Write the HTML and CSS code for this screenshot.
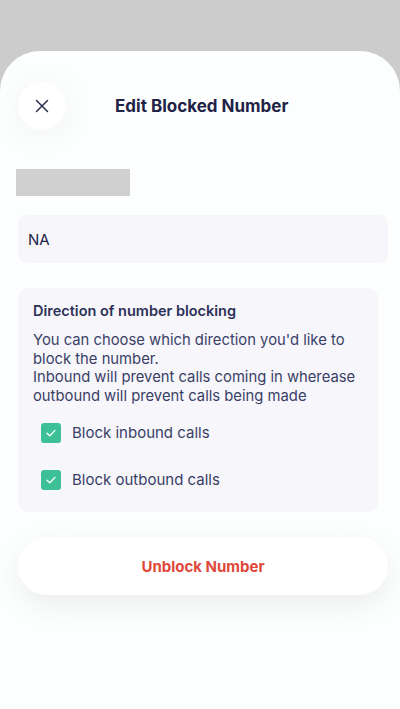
FILE: index.html
```html
<!DOCTYPE html>
<html lang="en">
<head>
  <meta charset="UTF-8" />
  <title>Edit Blocked Number</title>
  <link rel="stylesheet" href="styles.css">
</head>
<body>
  <div class="sheet">
    <div class="header">
      <button class="close-btn" aria-label="Close">
        <svg viewBox="0 0 14 14" width="14" height="14">
          <path d="M1.5 1.5 L12.5 12.5 M12.5 1.5 L1.5 12.5" stroke="#2b2f4f" stroke-width="1.5" stroke-linecap="round" fill="none"/>
        </svg>
      </button>
      <h2 class="title">Edit Blocked Number</h2>
    </div>

    <div class="placeholder"></div>

    <div class="field">NA</div>

    <div class="card">
      <h3 class="card-title">Direction of number blocking</h3>
      <p class="card-text">You can choose which direction you'd like to block the number.<br>Inbound will prevent calls coming in wherease outbound will prevent calls being made</p>

      <label class="check-row">
        <span class="check-box">
          <svg viewBox="0 0 12 12" width="12" height="12">
            <path d="M2 6.2 L4.8 8.8 L10 3.4" stroke="#fff" stroke-width="1.3" stroke-linecap="round" stroke-linejoin="round" fill="none"/>
          </svg>
        </span>
        Block inbound calls
      </label>
      <label class="check-row">
        <span class="check-box">
          <svg viewBox="0 0 12 12" width="12" height="12">
            <path d="M2 6.2 L4.8 8.8 L10 3.4" stroke="#fff" stroke-width="1.3" stroke-linecap="round" stroke-linejoin="round" fill="none"/>
          </svg>
        </span>
        Block outbound calls
      </label>
    </div>

    <button class="unblock-btn">Unblock Number</button>
  </div>
</body>
</html>
```

FILE: styles.css
```css
html, body {
  height: 100%;
}
body {
  margin: 0;
  background-color: #cccccc;
  font-family: Inter, 'Open Sans', sans-serif;
  color: #2d3158;
  padding-top: 51px;
  box-sizing: border-box;
}
.sheet {
  background-color: #fdfefe;
  border-radius: 40px 40px 0 0;
  min-height: 100%;
  padding: 31px 12px 0 18px;
  box-sizing: border-box;
}
.header {
  display: flex;
  align-items: center;
  height: 48px;
}
.close-btn {
  width: 48px;
  height: 48px;
  border-radius: 50%;
  border: none;
  background-color: #ffffff;
  box-shadow: 0 4px 36px rgba(0,0,0,0.06);
  display: flex;
  align-items: center;
  justify-content: center;
  padding: 0;
  cursor: pointer;
}
.title {
  margin: 0 0 0 49px;
  font-size: 17px;
  font-weight: 700;
  color: #1f2346;
}
.placeholder {
  width: 114px;
  height: 27px;
  background-color: #d0d0d0;
  margin: 39px 0 0 -2px;
}
.field {
  margin-top: 19px;
  height: 48px;
  background-color: #f6f6fb;
  border-radius: 8px;
  padding: 0 10px;
  display: flex;
  align-items: center;
  font-size: 15px;
  color: #1f2346;
}
.card {
  margin: 25px 10px 0 0;
  background-color: #f6f6fb;
  border-radius: 10px;
  padding: 14px 14px 9px 15px;
}
.card-title {
  margin: 0;
  font-size: 14.5px;
  font-weight: 600;
  color: #2d3158;
}
.card-text {
  margin: 12px 0 4px;
  font-size: 14.8px;
  line-height: 18.5px;
  color: #3a3f66;
}
.check-row {
  display: flex;
  align-items: center;
  gap: 11px;
  height: 47px;
  padding-left: 8px;
  font-size: 15px;
  color: #3a3f66;
}
.check-box {
  width: 20px;
  height: 20px;
  border-radius: 3px;
  background-color: #3ec096;
  display: flex;
  align-items: center;
  justify-content: center;
}
.unblock-btn {
  display: block;
  width: 370px;
  height: 58px;
  margin-top: 25px;
  border: none;
  border-radius: 29px;
  background-color: #ffffff;
  box-shadow: 0 10px 30px rgba(0,0,0,0.07);
  font-family: inherit;
  font-size: 15px;
  font-weight: 700;
  color: #e0483a;
  cursor: pointer;
}
```
